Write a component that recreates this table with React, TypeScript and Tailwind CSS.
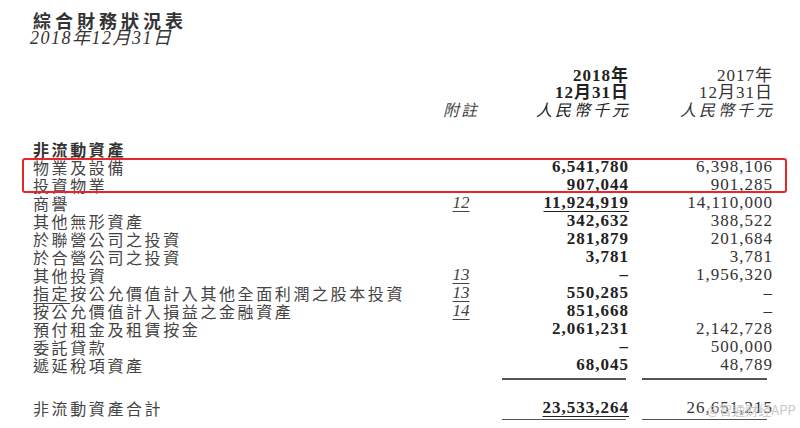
import React from "react";

const cjk = "font-['Noto_Sans_CJK_TC',sans-serif]";
const serif = "font-['Liberation_Serif','Noto_Sans_CJK_TC',serif]";

type Row = {
  label: React.ReactNode;
  note?: string;
  cur: string;
  prev: string;
  underline?: boolean;
};

const rows: Row[] = [
  { label: "物業及設備", cur: "6,541,780", prev: "6,398,106" },
  { label: "投資物業", cur: "907,044", prev: "901,285" },
  { label: "商譽", note: "12", cur: "11,924,919", prev: "14,110,000", underline: true },
  { label: "其他無形資產", cur: "342,632", prev: "388,522" },
  { label: "於聯營公司之投資", cur: "281,879", prev: "201,684" },
  { label: "於合營公司之投資", cur: "3,781", prev: "3,781" },
  { label: "其他投資", note: "13", cur: "–", prev: "1,956,320" },
  {
    label: (
      <>
        <span className="underline decoration-1 underline-offset-[3px]">指定</span>
        按公允價值計入其他全面利潤之股本投資
      </>
    ),
    note: "13",
    cur: "550,285",
    prev: "–",
  },
  { label: "按公允價值計入損益之金融資產", note: "14", cur: "851,668", prev: "–" },
  { label: "預付租金及租賃按金", cur: "2,061,231", prev: "2,142,728" },
  { label: "委託貸款", cur: "–", prev: "500,000" },
  { label: "遞延稅項資產", cur: "68,045", prev: "48,789" },
];

const TableRow = ({ row }: { row: Row }) => (
  <div className="flex h-[18px] items-center">
    <div className={`w-[397px] shrink-0 whitespace-nowrap text-[16px] leading-[18px] tracking-[2.6px] text-[#444] ${cjk}`}>
      {row.label}
    </div>
    <div className={`w-[62px] shrink-0 text-center text-[17px] italic leading-[18px] text-[#444] ${serif}`}>
      {row.note && <span className="underline decoration-1 underline-offset-[3px]">{row.note}</span>}
    </div>
    <div className={`w-[137px] shrink-0 text-right text-[17px] font-bold leading-[18px] tracking-[1px] text-[#222] ${serif}`}>
      <span className={row.underline ? "underline decoration-1 underline-offset-[3px]" : ""}>{row.cur}</span>
    </div>
    <div className={`ml-[16px] w-[128px] shrink-0 text-right text-[17px] leading-[18px] tracking-[1px] text-[#333] ${serif}`}>
      {row.prev}
    </div>
  </div>
);

const Lines = ({ className = "" }: { className?: string }) => (
  <div className={`flex ${className}`}>
    <div className="w-[469px] shrink-0" />
    <div className="h-[1.5px] w-[127px] bg-[#555]" />
    <div className="ml-[16px] h-[1.5px] w-[128px] bg-[#555]" />
  </div>
);

export default function App() {
  return (
    <div className="relative h-[428px] w-[800px] overflow-hidden bg-white px-[33px] pt-[11px]">
      {/* title */}
      <div className={`text-[18px] font-bold leading-[18px] tracking-[4px] text-[#333] ${cjk}`}>
        綜合財務狀況表
      </div>
      <div className={`-ml-[3px] text-[18px] italic leading-[18px] tracking-[1.5px] text-[#333] ${serif}`}>
        2018年12月31日
      </div>

      {/* column header */}
      <div className="mt-[20px] flex items-end">
        <div className="w-[397px] shrink-0" />
        <div className={`w-[62px] shrink-0 text-center text-[16px] italic leading-[17px] tracking-[2px] text-[#444] ${cjk}`}>
          附註
        </div>
        <div className={`w-[137px] shrink-0 text-right text-[17px] leading-[17px] text-[#222] ${serif}`}>
          <div className="font-bold tracking-[1px]">2018年</div>
          <div className="font-bold tracking-[1px]">12月31日</div>
          <div className={`mr-[-2px] text-[16px] italic tracking-[3px] ${cjk}`}>人民幣千元</div>
        </div>
        <div className={`ml-[16px] w-[128px] shrink-0 text-right text-[17px] leading-[17px] text-[#333] ${serif}`}>
          <div className="tracking-[1px]">2017年</div>
          <div className="tracking-[1px]">12月31日</div>
          <div className={`mr-[-2px] text-[16px] italic tracking-[3px] ${cjk}`}>人民幣千元</div>
        </div>
      </div>

      <div className={`mt-[22px] h-[18px] text-[16px] font-bold leading-[18px] tracking-[2.6px] text-[#333] ${cjk}`}>
        非流動資產
      </div>

      {rows.map((r, i) => (
        <TableRow key={i} row={r} />
      ))}

      <Lines className="mt-[4px]" />

      <div className="mt-[19px]">
        <TableRow
          row={{ label: "非流動資產合計", cur: "23,533,264", prev: "26,651,215", underline: true }}
        />
      </div>
      <Lines className="mt-[2px]" />

      {/* highlight box */}
      <div className="absolute left-[22px] top-[158px] h-[35px] w-[765px] rounded-[3px] border-2 border-[#e8262a]" />

      {/* watermark */}
      <div className={`absolute left-[707px] top-[403px] text-[13px] leading-[14px] text-[#c8c8c8] ${cjk}`}>
        @智通财经APP
      </div>
    </div>
  );
}
